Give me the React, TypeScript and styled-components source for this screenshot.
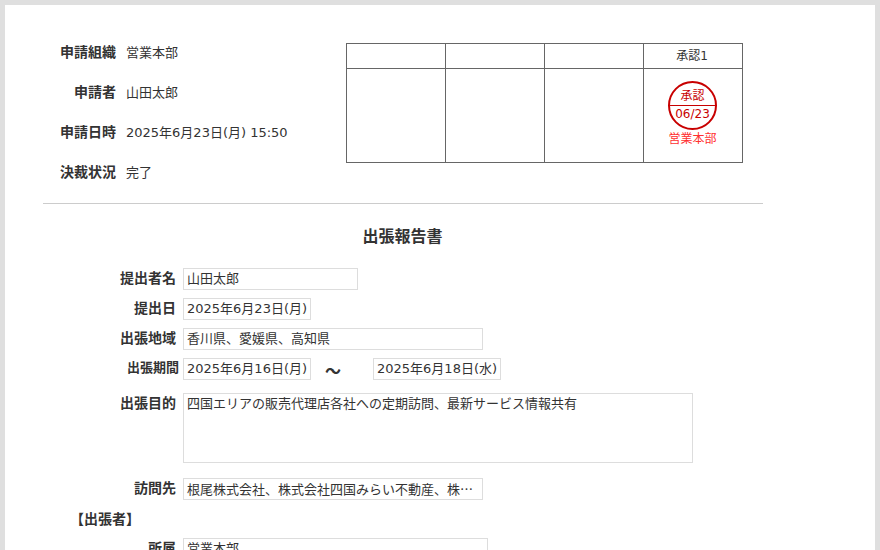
import styled, { createGlobalStyle } from 'styled-components';

const GlobalStyle = createGlobalStyle`
  html, body {
    margin: 0;
    height: 550px;
    overflow: hidden;
    background: #dfdfdf;
  }
  body {
    font-family: "DejaVu Sans", "Noto Sans CJK JP", sans-serif;
    color: #333;
    font-size: 13px;
  }
`;

const Shell = styled.div`
  padding: 5px 5px 0;
  height: 545px;
  overflow: hidden;
`;

const Sheet = styled.main`
  background: #fff;
  height: 545px;
  overflow: hidden;
  padding: 27px 0 0 38px;
  box-sizing: border-box;
`;

const Header = styled.section`
  display: flex;
  width: 720px;
`;

const InfoList = styled.div`
  width: 303px;
`;

const InfoRow = styled.div`
  display: flex;
  align-items: center;
  gap: 10px;
  height: 40px;
  padding-bottom: 2px;
  box-sizing: border-box;
`;

const InfoLabel = styled.div`
  width: 73px;
  text-align: right;
  font-weight: bold;
  font-size: 14px;
  color: #333;
`;

const InfoValue = styled.div`
  font-size: 13px;
`;

const ApprovalTable = styled.table`
  border-collapse: collapse;
  table-layout: fixed;
  width: 397px;
  height: 120px;
  margin-top: 11px;
  font-size: 12px;

  td {
    border: 1px solid #666;
    padding: 0;
    text-align: center;
    width: 98px;
  }
`;

const HeadRow = styled.tr`
  height: 25px;
`;

const HeadCell = styled.td`
  && {
    padding-bottom: 4px;
    text-indent: -2px;
  }
`;

const StampTd = styled.td`
  && {
    vertical-align: top;
    padding-top: 12px;
  }
`;

const StampCell = styled.div`
  display: flex;
  flex-direction: column;
  align-items: center;
  margin-left: -1px;
`;

const Stamp = styled.div`
  width: 49px;
  height: 49px;
  box-sizing: border-box;
  border: 2px solid #c80000;
  border-radius: 50%;
  display: flex;
  flex-direction: column;
  color: #c80000;
  overflow: hidden;
`;

const StampTop = styled.div`
  height: 22px;
  line-height: 27px;
  font-size: 12px;
  border-bottom: 1px solid #c80000;
  overflow: hidden;
`;

const StampBottom = styled.div`
  flex: 1;
  line-height: 15px;
  font-size: 12px;
  padding-top: 1px;
`;

const StampOrg = styled.div`
  color: #ff3030;
  font-size: 12px;
  line-height: 16px;
  margin-top: 1px;
`;

const Divider = styled.hr`
  width: 720px;
  margin: 11px 0 0;
  border: 0;
  border-top: 1px solid #ccc;
`;

const Title = styled.h1`
  width: 719px;
  margin: 23px 0 21px;
  font-size: 16px;
  line-height: 20px;
  text-align: center;
  font-weight: bold;
  color: #333;
`;

const Form = styled.div`
  display: flex;
  flex-direction: column;
  gap: 8px;
`;

const FormRow = styled.div<{ $gapTop?: number }>`
  display: flex;
  align-items: flex-start;
  margin-top: ${(p) => p.$gapTop ?? 0}px;
`;

const FieldLabel = styled.div<{ $compact?: boolean }>`
  width: ${(p) => (p.$compact ? 136 : 133)}px;
  margin-right: ${(p) => (p.$compact ? 4 : 7)}px;
  text-align: right;
  font-weight: bold;
  font-size: ${(p) => (p.$compact ? 13 : 14)}px;
  line-height: 20px;
  color: #333;
`;

const Field = styled.div<{ $width: number; $height?: number }>`
  width: ${(p) => p.$width}px;
  height: ${(p) => p.$height ?? 22}px;
  box-sizing: border-box;
  border: 1px solid #ddd;
  padding: 0 3px;
  font-size: 13px;
  line-height: 20px;
  white-space: nowrap;
  overflow: hidden;
`;

const Ellipsis = styled.span`
  font-family: "Noto Sans CJK JP", sans-serif;
`;

const Tilde = styled.div`
  width: 62px;
  height: 22px;
  box-sizing: border-box;
  padding-left: 14px;
  font-size: 16px;
  line-height: 28px;
  font-weight: bold;
`;

const SectionTitle = styled.div`
  margin: 9px 0 9px 27px;
  font-weight: bold;
  font-size: 14px;
  line-height: 20px;
  color: #333;
`;

export default function App() {
  return (
    <Shell>
      <GlobalStyle />
      <Sheet>
        <Header>
          <InfoList>
            <InfoRow>
              <InfoLabel>申請組織</InfoLabel>
              <InfoValue>営業本部</InfoValue>
            </InfoRow>
            <InfoRow>
              <InfoLabel>申請者</InfoLabel>
              <InfoValue>山田太郎</InfoValue>
            </InfoRow>
            <InfoRow>
              <InfoLabel>申請日時</InfoLabel>
              <InfoValue>2025年6月23日(月) 15:50</InfoValue>
            </InfoRow>
            <InfoRow>
              <InfoLabel>決裁状況</InfoLabel>
              <InfoValue>完了</InfoValue>
            </InfoRow>
          </InfoList>
          <ApprovalTable>
            <tbody>
              <HeadRow>
                <td />
                <td />
                <td />
                <HeadCell>承認1</HeadCell>
              </HeadRow>
              <tr>
                <td />
                <td />
                <td />
                <StampTd>
                  <StampCell>
                    <Stamp>
                      <StampTop>承認</StampTop>
                      <StampBottom>06/23</StampBottom>
                    </Stamp>
                    <StampOrg>営業本部</StampOrg>
                  </StampCell>
                </StampTd>
              </tr>
            </tbody>
          </ApprovalTable>
        </Header>
        <Divider />
        <Title>出張報告書</Title>
        <Form>
          <FormRow>
            <FieldLabel>提出者名</FieldLabel>
            <Field $width={175}>山田太郎</Field>
          </FormRow>
          <FormRow>
            <FieldLabel>提出日</FieldLabel>
            <Field $width={128}>2025年6月23日(月)</Field>
          </FormRow>
          <FormRow>
            <FieldLabel>出張地域</FieldLabel>
            <Field $width={300}>香川県、愛媛県、高知県</Field>
          </FormRow>
          <FormRow>
            <FieldLabel $compact>出張期間</FieldLabel>
            <Field $width={128}>2025年6月16日(月)</Field>
            <Tilde>〜</Tilde>
            <Field $width={128}>2025年6月18日(水)</Field>
          </FormRow>
          <FormRow $gapTop={5}>
            <FieldLabel>出張目的</FieldLabel>
            <Field $width={510} $height={70}>
              四国エリアの販売代理店各社への定期訪問、最新サービス情報共有
            </Field>
          </FormRow>
          <FormRow $gapTop={7}>
            <FieldLabel>訪問先</FieldLabel>
            <Field $width={300}>
              根尾株式会社、株式会社四国みらい不動産、株
              <Ellipsis lang="ja">…</Ellipsis>
            </Field>
          </FormRow>
        </Form>
        <SectionTitle>【出張者】</SectionTitle>
        <FormRow>
          <FieldLabel>所属</FieldLabel>
          <Field $width={305}>営業本部</Field>
        </FormRow>
      </Sheet>
    </Shell>
  );
}
